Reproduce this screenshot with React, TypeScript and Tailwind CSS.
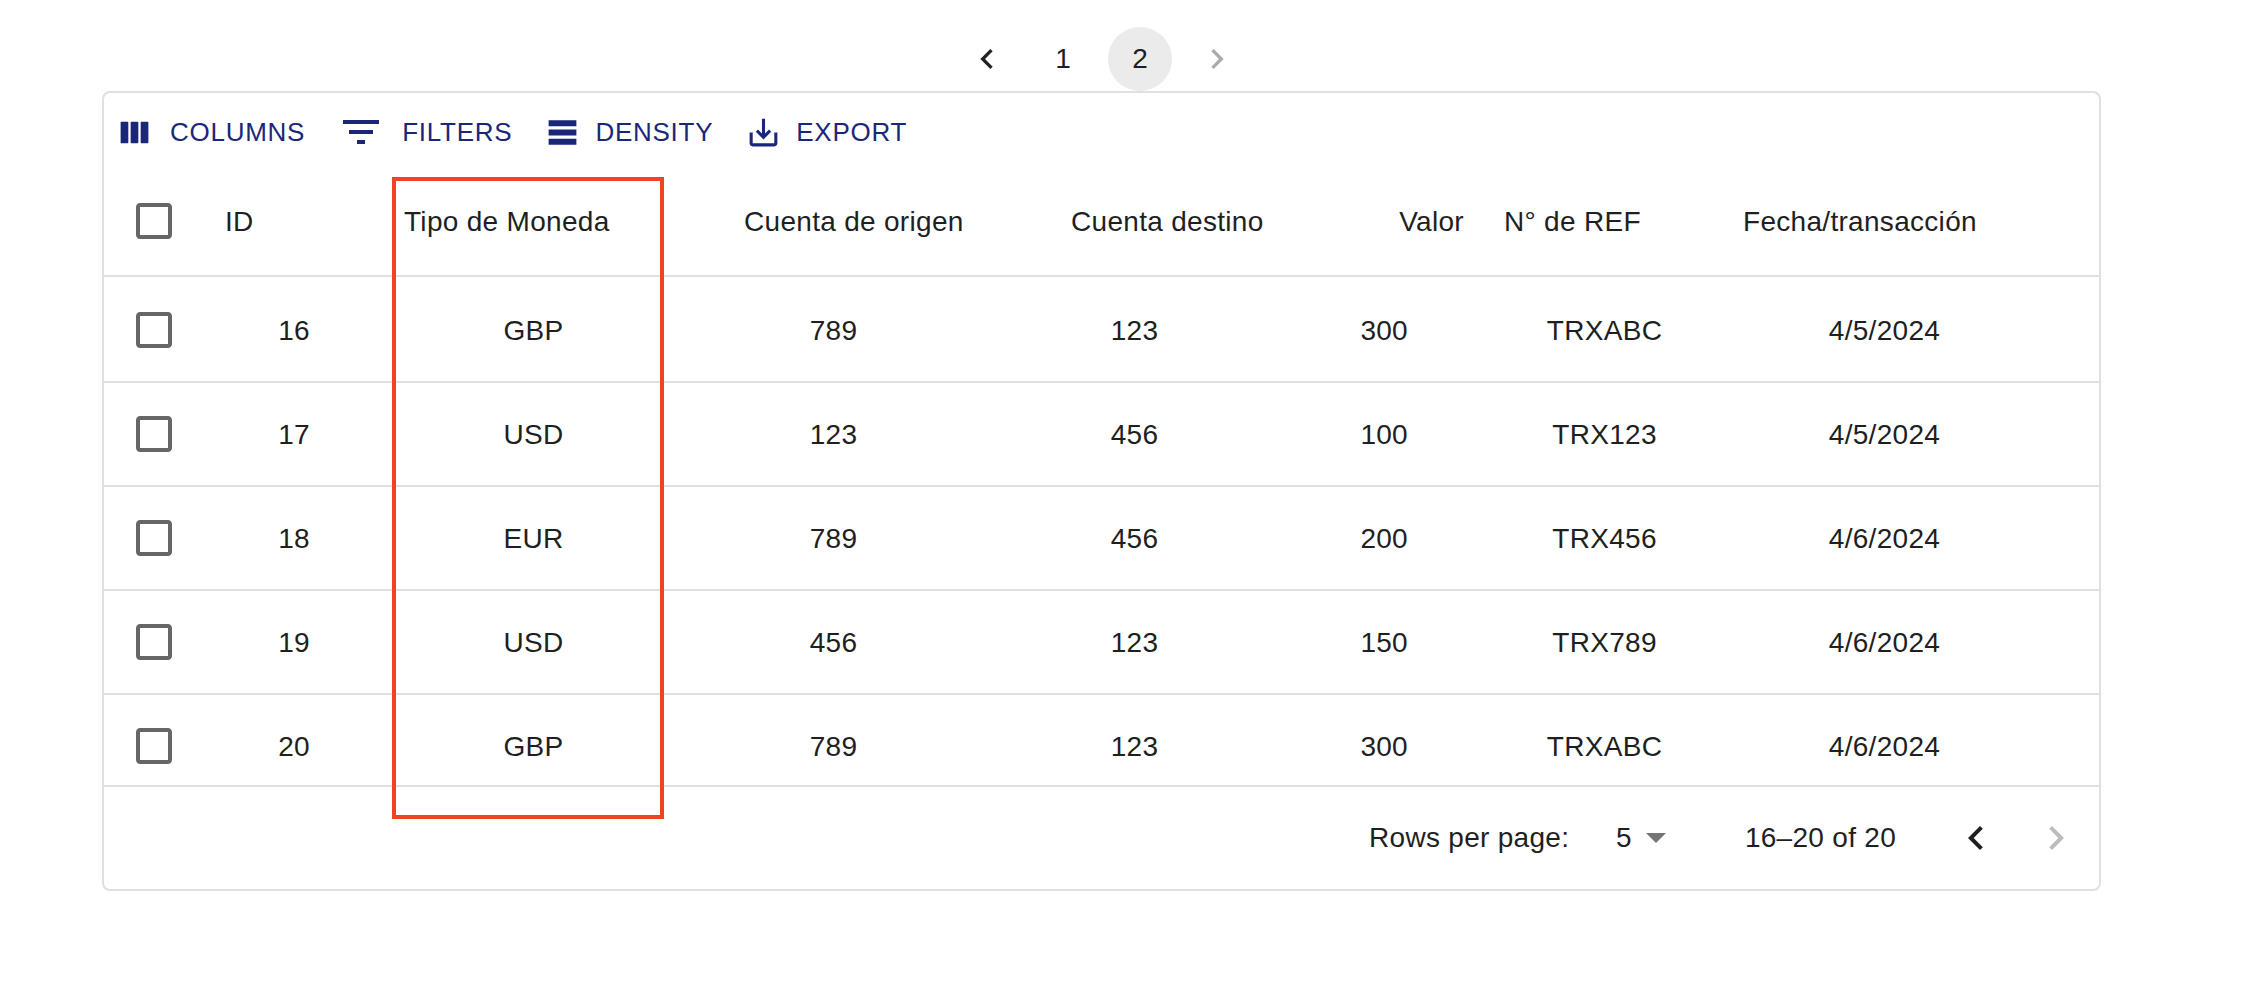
const FONT = "font-['Liberation_Sans',Arial,sans-serif]";

const rows = [
  { id: 16, currency: 'GBP', from: 789, to: 123, value: 300, ref: 'TRXABC', date: '4/5/2024' },
  { id: 17, currency: 'USD', from: 123, to: 456, value: 100, ref: 'TRX123', date: '4/5/2024' },
  { id: 18, currency: 'EUR', from: 789, to: 456, value: 200, ref: 'TRX456', date: '4/6/2024' },
  { id: 19, currency: 'USD', from: 456, to: 123, value: 150, ref: 'TRX789', date: '4/6/2024' },
  { id: 20, currency: 'GBP', from: 789, to: 123, value: 300, ref: 'TRXABC', date: '4/6/2024' },
];

// columnas de la tabla, compartidas por cabecera y filas
const GRID = 'grid grid-cols-[105px_175px_296px_304px_298px_197px_248px_312px_1fr] items-center';

function Icon({ d, size, className }: { d: string; size: number; className?: string }) {
  return (
    <svg width={size} height={size} viewBox="0 0 24 24" fill="currentColor" className={'flex-none ' + (className ?? '')}>
      <path d={d} />
    </svg>
  );
}

function Chevron({ dir, size, className }: { dir: 'left' | 'right'; size: number; className?: string }) {
  return (
    <Icon
      size={size}
      className={className}
      d={dir === 'left' ? 'M15.41 7.41 14 6l-6 6 6 6 1.41-1.41L10.83 12z' : 'M10 6 8.59 7.41 13.17 12l-4.58 4.59L10 18l6-6z'}
    />
  );
}

function Checkbox() {
  return (
    <Icon
      size={48}
      className="text-[#666666]"
      d="M19 5v14H5V5h14m0-2H5c-1.1 0-2 .9-2 2v14c0 1.1.9 2 2 2h14c1.1 0 2-.9 2-2V5c0-1.1-.9-2-2-2z"
    />
  );
}

function ToolButton({ d, size, label, gap }: { d: string; size: number; label: string; gap: string }) {
  return (
    <button type="button" className={'flex items-center text-[26px] tracking-[0.74px] text-[#1a2779] ' + gap}>
      <Icon d={d} size={size} />
      {label}
    </button>
  );
}

export default function App() {
  return (
    <div className={'relative h-[1002px] w-[2260px] overflow-hidden bg-white text-[#1f1f1f] ' + FONT}>
      <div className="ml-[102px] w-[1999px] pt-[27px]">
        <div className="flex h-16 items-center justify-center gap-[13px] text-[28px]">
          <div className="flex h-16 w-16 items-center justify-center pl-[2px]">
            <Chevron dir="left" size={40} className="text-[#222222]" />
          </div>
          <div className="flex h-16 w-16 items-center justify-center">1</div>
          <div className="flex h-16 w-16 items-center justify-center rounded-full bg-[#ebebeb]">2</div>
          <div className="flex h-16 w-16 items-center justify-center">
            <Chevron dir="right" size={40} className="text-[#ababab]" />
          </div>
        </div>

        <div className="h-[800px] rounded-lg border-2 border-[#e0e0e0]">
          <div className="flex h-[78px] items-center gap-8 pl-[12px]">
            <ToolButton label="COLUMNS" size={37} gap="gap-[17px]" d="M3 5.5c0-.3.2-.5.5-.5h4c.3 0 .5.2.5.5v13c0 .3-.2.5-.5.5h-4c-.3 0-.5-.2-.5-.5zm6.500 0c0-.3.2-.5.5-.5h4c.3 0 .5.2.5.5v13c0 .3-.2.5-.5.5h-4c-.3 0-.5-.2-.5-.5zm6.500 0c0-.3.2-.5.5-.5h4c.3 0 .5.2.5.5v13c0 .3-.2.5-.5.5h-4c-.3 0-.5-.2-.5-.5z" />
            <ToolButton label="FILTERS" size={48} gap="gap-[17px]" d="M10 18h4v-2h-4v2zM3 6v2h18V6H3zm3 7h12v-2H6v2z" />
            <ToolButton label="DENSITY" size={37} gap="gap-[14px]" d="M21 8H3V4h18v4zm0 2H3v4h18v-4zm0 6H3v4h18v-4z" />
            <ToolButton
              label="EXPORT"
              size={37}
              gap="gap-[14px]"
              d="M19 12v7H5v-7H3v7c0 1.100.9 2 2 2h14c1.100 0 2-.9 2-2v-7h-2zm-6 .67l2.590-2.580L17 11.500l-5 5-5-5 1.410-1.410L11 12.670V3h2z"
            />
          </div>

          <div className={GRID + ' h-[106px] border-b-2 border-[#e0e0e0] pb-[4px] text-[28px] tracking-[0.3px]'}>
            <div className="flex justify-center pr-[6px]">
              <Checkbox />
            </div>
            <div className="pl-[16px] pt-[2px]">ID</div>
            <div className="pl-[20px] pt-[2px]">Tipo de Moneda</div>
            <div className="pl-[64px] pt-[2px]">Cuenta de origen</div>
            <div className="pl-[87px] pt-[2px]">Cuenta destino</div>
            <div className="pr-[15px] pt-[2px] text-right">Valor</div>
            <div className="pl-[25px] pt-[2px]">N° de REF</div>
            <div className="pl-[16px] pt-[2px]">Fecha/transacción</div>
          </div>

          <div className="h-[510px] overflow-hidden border-b-2 border-[#e0e0e0] pt-[2px] text-[28px] tracking-[0.3px]">
            {rows.map((r) => (
              <div key={r.id} className={GRID + ' h-[104px] border-b-2 border-[#e0e0e0]'}>
                <div className="flex justify-center pr-[6px]">
                  <Checkbox />
                </div>
                <div className="pr-[74px] pt-[2px] text-right">{r.id}</div>
                <div className="pl-[3px] pt-[2px] text-center">{r.currency}</div>
                <div className="pl-[3px] pt-[2px] text-center">{r.from}</div>
                <div className="pl-[3px] pt-[2px] text-center">{r.to}</div>
                <div className="pr-[71px] pt-[2px] text-right">{r.value}</div>
                <div className="pl-[3px] pt-[2px] text-center">{r.ref}</div>
                <div className="pl-[3px] pt-[2px] text-center">{r.date}</div>
              </div>
            ))}
          </div>

          <div className="flex h-[101px] items-center pl-[1265px] text-[28px] tracking-[0.3px]">
            <span className="w-[247px]">Rows per page:</span>
            <span>5</span>
            <svg width="20" height="10" viewBox="0 0 20 10" fill="#757575" className="ml-[14px]">
              <path d="M0 0h20L10 10z" />
            </svg>
            <span className="ml-[79px] w-[207px]">16–20 of 20</span>
            <Chevron dir="left" size={48} className="text-[#1f1f1f]" />
            <Chevron dir="right" size={48} className="ml-[32px] text-[#bdbdbd]" />
          </div>
        </div>
      </div>

      <div className="absolute left-[392px] top-[177px] h-[642px] w-[272px] border-[4px] border-[#f04326]" />
    </div>
  );
}
